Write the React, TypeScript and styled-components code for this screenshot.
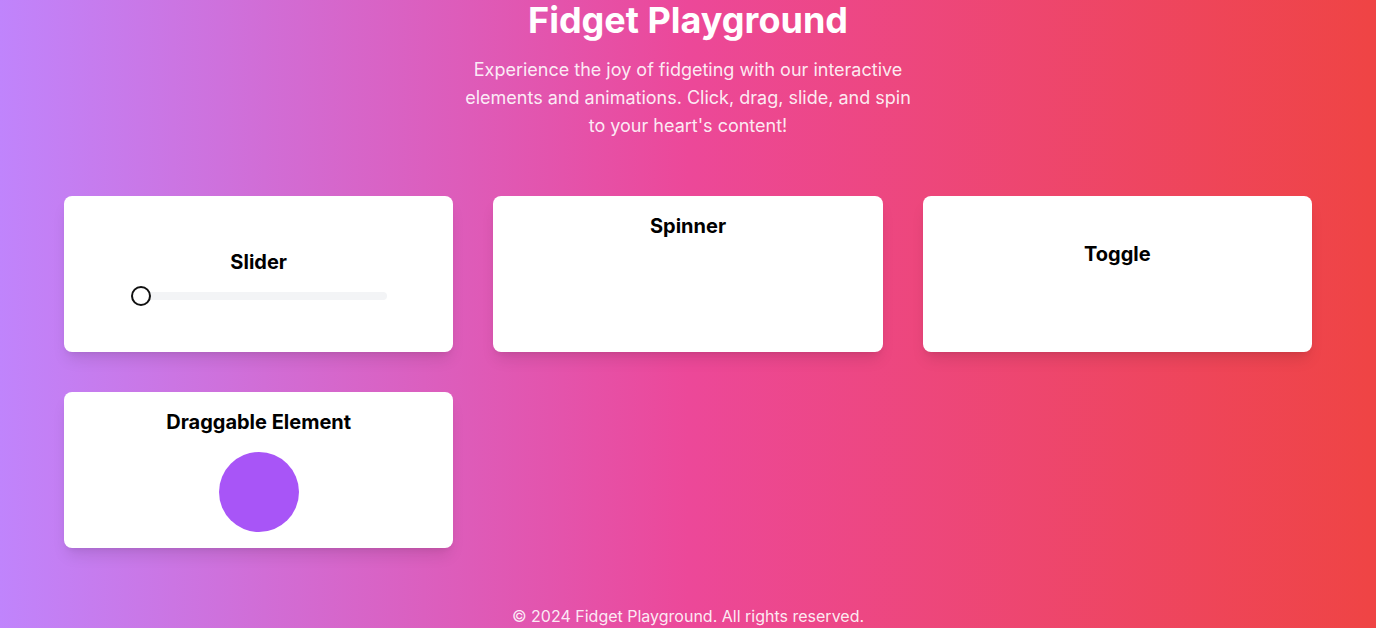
import React, { useState } from "react";
import styled, { createGlobalStyle } from "styled-components";

const GlobalStyle = createGlobalStyle`
  * { box-sizing: border-box; }
  html, body { margin: 0; padding: 0; }
  body {
    font-family: Inter, "Noto Sans", "Liberation Sans", sans-serif;
    -webkit-font-smoothing: antialiased;
  }
`;

const Page = styled.div`
  min-height: 100vh;
  background: linear-gradient(to right, #c084fc, #ec4899, #ef4444);
  padding: 0 64px;
  display: flex;
  flex-direction: column;
`;

const Header = styled.header`
  display: flex;
  flex-direction: column;
  align-items: center;
  text-align: center;
`;

const Title = styled.h1`
  margin: 0 0 16px;
  font-size: 36px;
  line-height: 40px;
  font-weight: 700;
  color: #fff;
`;

const Intro = styled.p`
  margin: 0;
  max-width: 448px;
  font-size: 18px;
  line-height: 28px;
  color: rgba(255, 255, 255, 0.9);
`;

const Grid = styled.main`
  margin-top: 56px;
  display: grid;
  grid-template-columns: repeat(3, 1fr);
  gap: 40px;
`;

const Card = styled.section`
  background: #fff;
  border-radius: 8px;
  padding: 16px;
  display: flex;
  flex-direction: column;
  align-items: center;
  justify-content: center;
  box-shadow: 0 10px 15px -3px rgba(0, 0, 0, 0.1), 0 4px 6px -4px rgba(0, 0, 0, 0.1);
`;

const CardTitle = styled.h2`
  margin: 0 0 16px;
  font-size: 20px;
  line-height: 28px;
  font-weight: 650;
  color: #000;
`;

const Range = styled.input`
  -webkit-appearance: none;
  appearance: none;
  width: 256px;
  height: 8px;
  margin: 0;
  border-radius: 8px;
  background: #f3f4f6;
  outline: none;
  cursor: pointer;

  &::-webkit-slider-thumb {
    -webkit-appearance: none;
    appearance: none;
    width: 20px;
    height: 20px;
    border-radius: 50%;
    background: #fff;
    border: 2px solid #111;
  }
  &::-moz-range-thumb {
    width: 16px;
    height: 16px;
    border-radius: 50%;
    background: #fff;
    border: 2px solid #111;
  }
`;

const SpinnerStage = styled.div<{ $angle: number }>`
  width: 80px;
  height: 80px;
  border-radius: 50%;
  background: transparent;
  transform: rotate(${(p) => p.$angle}deg);
  cursor: pointer;
`;

const ToggleSwitch = styled.button<{ $on: boolean }>`
  width: 48px;
  height: 24px;
  padding: 0;
  border: none;
  border-radius: 12px;
  background: ${(p) => (p.$on ? "#fff" : "transparent")};
  cursor: pointer;
`;

const Blob = styled.div`
  width: 80px;
  height: 80px;
  border-radius: 50%;
  background: #a855f7;
  cursor: grab;
`;

const Footer = styled.footer`
  margin-top: 56px;
  padding-bottom: 16px;
  text-align: center;
  font-size: 16px;
  line-height: 24px;
  color: rgba(255, 255, 255, 0.9);
`;

export default function App() {
  const [value, setValue] = useState(0);
  const [angle, setAngle] = useState(0);
  const [on, setOn] = useState(false);

  return (
    <>
      <GlobalStyle />
      <Page>
        <Header>
          <Title>Fidget Playground</Title>
          <Intro>
            Experience the joy of fidgeting with our interactive elements and
            animations. Click, drag, slide, and spin to your heart's content!
          </Intro>
        </Header>
        <Grid>
          <Card>
            <CardTitle>Slider</CardTitle>
            <Range
              type="range"
              min={0}
              max={100}
              value={value}
              onChange={(e) => setValue(Number(e.target.value))}
            />
          </Card>
          <Card>
            <CardTitle>Spinner</CardTitle>
            <SpinnerStage $angle={angle} onClick={() => setAngle(angle + 360)} />
          </Card>
          <Card>
            <CardTitle>Toggle</CardTitle>
            <ToggleSwitch $on={on} aria-label="Toggle" onClick={() => setOn(!on)} />
          </Card>
          <Card>
            <CardTitle>Draggable Element</CardTitle>
            <Blob />
          </Card>
        </Grid>
        <Footer>© 2024 Fidget Playground. All rights reserved.</Footer>
      </Page>
    </>
  );
}
